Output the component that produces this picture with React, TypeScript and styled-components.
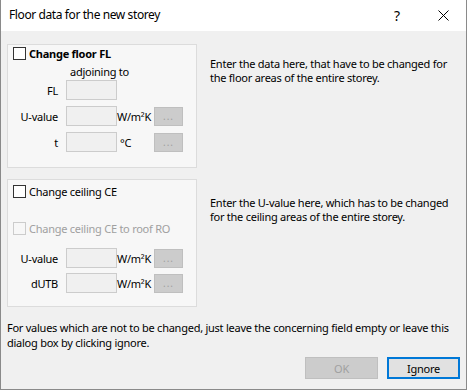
import React from "react";
import styled, { createGlobalStyle } from "styled-components";

const GlobalStyle = createGlobalStyle`
  html, body {
    margin: 0;
    padding: 0;
    background: #ffffff;
  }
  body {
    font-family: "Noto Sans", "Liberation Sans", sans-serif;
    font-size: 11px;
    letter-spacing: -0.25px;
    color: #000;
  }
`;

const Window = styled.div`
  width: 467px;
  height: 390px;
  box-sizing: border-box;
  border: 1px solid #8a8a8a;
  border-top: none;
  display: flex;
  flex-direction: column;
  background: #f0f0f0;
  overflow: hidden;
`;

const TitleBar = styled.div`
  height: 31px;
  flex: none;
  background: #fff;
  display: flex;
  align-items: center;
  padding-left: 8px;
`;

const Title = styled.div`
  flex: 1;
  font-size: 12px;
  letter-spacing: -0.4px;
  padding-bottom: 2px;
`;

const TitleButton = styled.div`
  width: 46px;
  height: 31px;
  display: flex;
  align-items: center;
  justify-content: center;
  font-size: 14px;
`;

const Body = styled.div`
  flex: 1;
  display: flex;
  flex-direction: column;
  padding: 13px 6px 0 6px;
`;

const Section = styled.div<{ $gap?: number }>`
  display: flex;
  align-items: flex-start;
  margin-top: ${(p) => p.$gap ?? 0}px;
`;

const GroupBox = styled.div<{ $height: number; $padTop: number }>`
  width: 190px;
  height: ${(p) => p.$height}px;
  box-sizing: border-box;
  border: 1px solid #dcdcdc;
  background: #f7f7f7;
  display: flex;
  flex-direction: column;
  padding-top: ${(p) => p.$padTop}px;
  flex: none;
`;

const Description = styled.div<{ $top: number }>`
  margin: ${(p) => p.$top}px 0 0 13px;
  line-height: 14px;
  white-space: nowrap;
`;

const CheckRow = styled.label<{ $disabled?: boolean; $top?: number; $bold?: boolean }>`
  display: flex;
  align-items: center;
  height: 15px;
  padding-left: 5px;
  margin-top: ${(p) => p.$top ?? 0}px;
  color: ${(p) => (p.$disabled ? "#a0a0a0" : "#000")};
  font-weight: ${(p) => (p.$bold ? 700 : 400)};
  white-space: nowrap;
`;

const CheckBox = styled.span<{ $disabled?: boolean }>`
  width: 13px;
  height: 13px;
  box-sizing: border-box;
  border: 1px solid ${(p) => (p.$disabled ? "#cccccc" : "#333333")};
  background: ${(p) => (p.$disabled ? "#f7f7f7" : "#fff")};
  margin-right: 3px;
  flex: none;
`;

const Caption = styled.div`
  margin: 4px 0 0 62px;
  line-height: 14px;
`;

const FieldRow = styled.div<{ $top: number }>`
  display: grid;
  grid-template-columns: 50px 59px 37px 37px;
  align-items: center;
  margin-top: ${(p) => p.$top}px;
  height: 20px;
`;

const FieldLabel = styled.div`
  grid-column: 1;
  text-align: right;
  white-space: nowrap;
`;

const Edit = styled.div`
  grid-column: 2;
  width: 51px;
  height: 20px;
  box-sizing: border-box;
  border: 1px solid #cccccc;
  background: #f0f0f0;
  margin-left: 8px;
`;

const Unit = styled.div<{ $indent?: number }>`
  grid-column: 3;
  padding-left: ${(p) => p.$indent ?? 0}px;
  white-space: nowrap;
`;

const DotsButton = styled.div`
  grid-column: 4;
  width: 29px;
  height: 19px;
  box-sizing: border-box;
  border: 1px solid #bfbfbf;
  background: #cccccc;
  color: #a0a0a0;
  display: flex;
  align-items: center;
  justify-content: center;
  font-size: 10px;
  letter-spacing: 1px;
`;

const Note = styled.div`
  margin-top: 13px;
  line-height: 15px;
  white-space: nowrap;
`;

const ButtonRow = styled.div`
  display: flex;
  justify-content: flex-end;
  gap: 9px;
  margin-top: 7px;
`;

const PushButton = styled.div<{ $disabled?: boolean; $default?: boolean }>`
  width: 73px;
  height: 22px;
  box-sizing: border-box;
  display: flex;
  align-items: center;
  justify-content: center;
  background: ${(p) => (p.$disabled ? "#cccccc" : "#e1e1e1")};
  color: ${(p) => (p.$disabled ? "#a0a0a0" : "#000")};
  border: ${(p) => (p.$default ? "2px solid #0078d7" : "1px solid #bfbfbf")};
`;

function Field({ label, unit, button, top, indent }: { label: string; unit?: string; button?: boolean; top: number; indent?: number }) {
  return (
    <FieldRow $top={top}>
      <FieldLabel>{label}</FieldLabel>
      <Edit />
      {unit && <Unit $indent={indent}>{unit}</Unit>}
      {button && <DotsButton>...</DotsButton>}
    </FieldRow>
  );
}

export default function App() {
  return (
    <>
      <GlobalStyle />
      <Window>
        <TitleBar>
          <Title>Floor data for the new storey</Title>
          <TitleButton>?</TitleButton>
          <TitleButton>
            <svg width="11" height="11" viewBox="0 0 11 11">
              <path d="M0.5 0.5 L10.5 10.5 M10.5 0.5 L0.5 10.5" stroke="#000" strokeWidth="1" fill="none" />
            </svg>
          </TitleButton>
        </TitleBar>
        <Body>
          <Section>
            <GroupBox $height={124} $padTop={1}>
              <CheckRow $bold>
                <CheckBox />
                Change floor FL
              </CheckRow>
              <Caption>adjoining to</Caption>
              <Field label="FL" top={1} />
              <Field label="U-value" unit="W/m²K" button top={6} />
              <Field label="t" unit="°C" button top={6} indent={3} />
            </GroupBox>
            <Description $top={13}>
              Enter the data here, that have to be changed for
              <br />
              the floor areas of the entire storey.
            </Description>
          </Section>
          <Section $gap={11}>
            <GroupBox $height={128} $padTop={4}>
              <CheckRow>
                <CheckBox />
                Change ceiling CE
              </CheckRow>
              <CheckRow $disabled $top={22}>
                <CheckBox $disabled />
                Change ceiling CE to roof RO
              </CheckRow>
              <Field label="U-value" unit="W/m²K" button top={12} />
              <Field label="dUTB" unit="W/m²K" button top={5} />
            </GroupBox>
            <Description $top={17}>
              Enter the U-value here, which has to be changed
              <br />
              for the ceiling areas of the entire storey.
            </Description>
          </Section>
          <Note>
            For values which are not to be changed, just leave the concerning field empty or leave this
            <br />
            dialog box by clicking ignore.
          </Note>
          <ButtonRow>
            <PushButton $disabled>OK</PushButton>
            <PushButton $default>Ignore</PushButton>
          </ButtonRow>
        </Body>
      </Window>
    </>
  );
}
